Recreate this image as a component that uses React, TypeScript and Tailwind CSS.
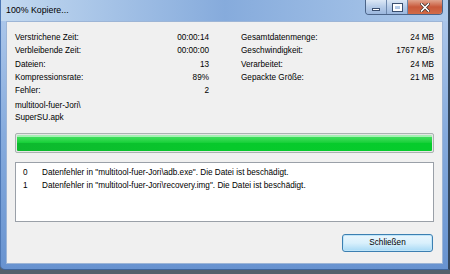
import React from "react";

const font = { fontFamily: '"Liberation Sans", Arial, sans-serif' };

const leftStats = [
  { label: "Verstrichene Zeit:", value: "00:00:14" },
  { label: "Verbleibende Zeit:", value: "00:00:00" },
  { label: "Dateien:", value: "13" },
  { label: "Kompressionsrate:", value: "89%" },
  { label: "Fehler:", value: "2" },
];

const rightStats = [
  { label: "Gesamtdatenmenge:", value: "24 MB" },
  { label: "Geschwindigkeit:", value: "1767 KB/s" },
  { label: "Verarbeitet:", value: "24 MB" },
  { label: "Gepackte Größe:", value: "21 MB" },
];

const errors = [
  'Datenfehler in "multitool-fuer-Jori\\adb.exe". Die Datei ist beschädigt.',
  'Datenfehler in "multitool-fuer-Jori\\recovery.img". Die Datei ist beschädigt.',
];

const StatRow = ({ label, value }: { label: string; value: string }) => (
  <div className="flex justify-between h-[13.25px] leading-[13.25px]">
    <span>{label}</span>
    <span>{value}</span>
  </div>
);

export default function App() {
  return (
    <div className="w-[450px] h-[274px] bg-[#56606c] overflow-hidden" style={font}>
      {/* window frame */}
      <div className="relative w-[450px] h-[270px] flex flex-col bg-gradient-to-b from-[#b2cbec] via-[#86abdd] to-[#6893d0] border-l border-b border-r-2 border-l-[#4d77b4] border-b-[#3f659c] border-r-[#33475f] rounded-bl-[5px]">
        {/* title bar */}
        <div className="h-[21px] flex items-center pl-[5px] bg-gradient-to-r from-[#c3d9f0] via-[#86abdc] to-[#aecaeb]">
          <span className="text-[8.8px] text-black pt-[1px]">100% Kopiere...</span>
        </div>

        {/* caption buttons */}
        <div className="absolute top-0 right-[5px] flex h-[15px] border border-t-0 border-[#4b6488] rounded-b-[4px] overflow-hidden">
          <div className="w-[21px] flex items-center justify-center bg-gradient-to-b from-[#dce8f6] via-[#b5cbe8] to-[#9bb7de] border-r border-[#6d88ad]">
            <div className="w-[8px] h-[3px] mt-[4px] bg-white border border-[#3a4f70]" />
          </div>
          <div className="w-[21px] flex items-center justify-center bg-gradient-to-b from-[#dce8f6] via-[#b5cbe8] to-[#9bb7de] border-r border-[#6d88ad]">
            <div className="w-[9px] h-[7px] border-2 border-white outline outline-1 outline-[#3a4f70]" />
          </div>
          <div className="w-[34px] flex items-center justify-center bg-gradient-to-b from-[#e0a48e] via-[#c8583a] to-[#d26c48]">
            <svg width="10" height="9" viewBox="0 0 10 9">
              <path d="M1.5 1 L8.5 8 M8.5 1 L1.5 8" stroke="#3a2a26" strokeWidth="3" strokeLinecap="square" />
              <path d="M1.5 1 L8.5 8 M8.5 1 L1.5 8" stroke="#fff" strokeWidth="1.6" strokeLinecap="square" />
            </svg>
          </div>
        </div>

        {/* client area */}
        <div className="flex-1 ml-[5px] mr-[5px] mb-[5px] bg-[#f0f0f0] border border-[#9db5d6] flex flex-col pl-[8px] pr-[9px] pt-[9px] text-[8.2px] text-black">
          <div className="grid grid-cols-[194px_193px] gap-x-[32px]">
            <div className="flex flex-col">
              {leftStats.map((s) => (
                <StatRow key={s.label} label={s.label} value={s.value} />
              ))}
              <div className="mt-[3px] leading-[12px]">
                <div>multitool-fuer-Jori\</div>
                <div>SuperSU.apk</div>
              </div>
            </div>
            <div className="flex flex-col">
              {rightStats.map((s) => (
                <StatRow key={s.label} label={s.label} value={s.value} />
              ))}
            </div>
          </div>

          {/* progress bar */}
          <div className="mt-[9px] h-[20px] w-[419px] border border-[#a9b3b0] rounded-[2px] bg-[#e6e6e6] p-px">
            <div className="h-full w-full flex flex-col rounded-[1px] overflow-hidden">
              <div className="h-[2px] bg-[#a6efb4]" />
              <div className="h-[6px] bg-gradient-to-b from-[#3ede5c] to-[#12cf36]" />
              <div className="flex-1 bg-gradient-to-r from-[#0db82e] via-[#07c92b] to-[#06cc2c]" />
            </div>
          </div>

          {/* error list */}
          <div className="mt-[9px] h-[60px] w-[419px] border border-[#9aa0a8] bg-white pt-[3px]">
            {errors.map((e, i) => (
              <div key={i} className="flex h-[13px] leading-[13px]">
                <span className="w-[26px] pl-[7px]">{i}</span>
                <span>{e}</span>
              </div>
            ))}
          </div>

          {/* close button */}
          <div className="flex justify-end mt-[12px]">
            <button className="w-[91px] h-[18px] rounded-[3px] border border-[#3c7fb1] bg-gradient-to-b from-[#eaf6fd] via-[#d9f0fc] to-[#a7d9f5] shadow-[inset_0_0_0_1px_#bfe5f9] text-[8.2px] text-black leading-none">
              Schließen
            </button>
          </div>
        </div>
      </div>
    </div>
  );
}
